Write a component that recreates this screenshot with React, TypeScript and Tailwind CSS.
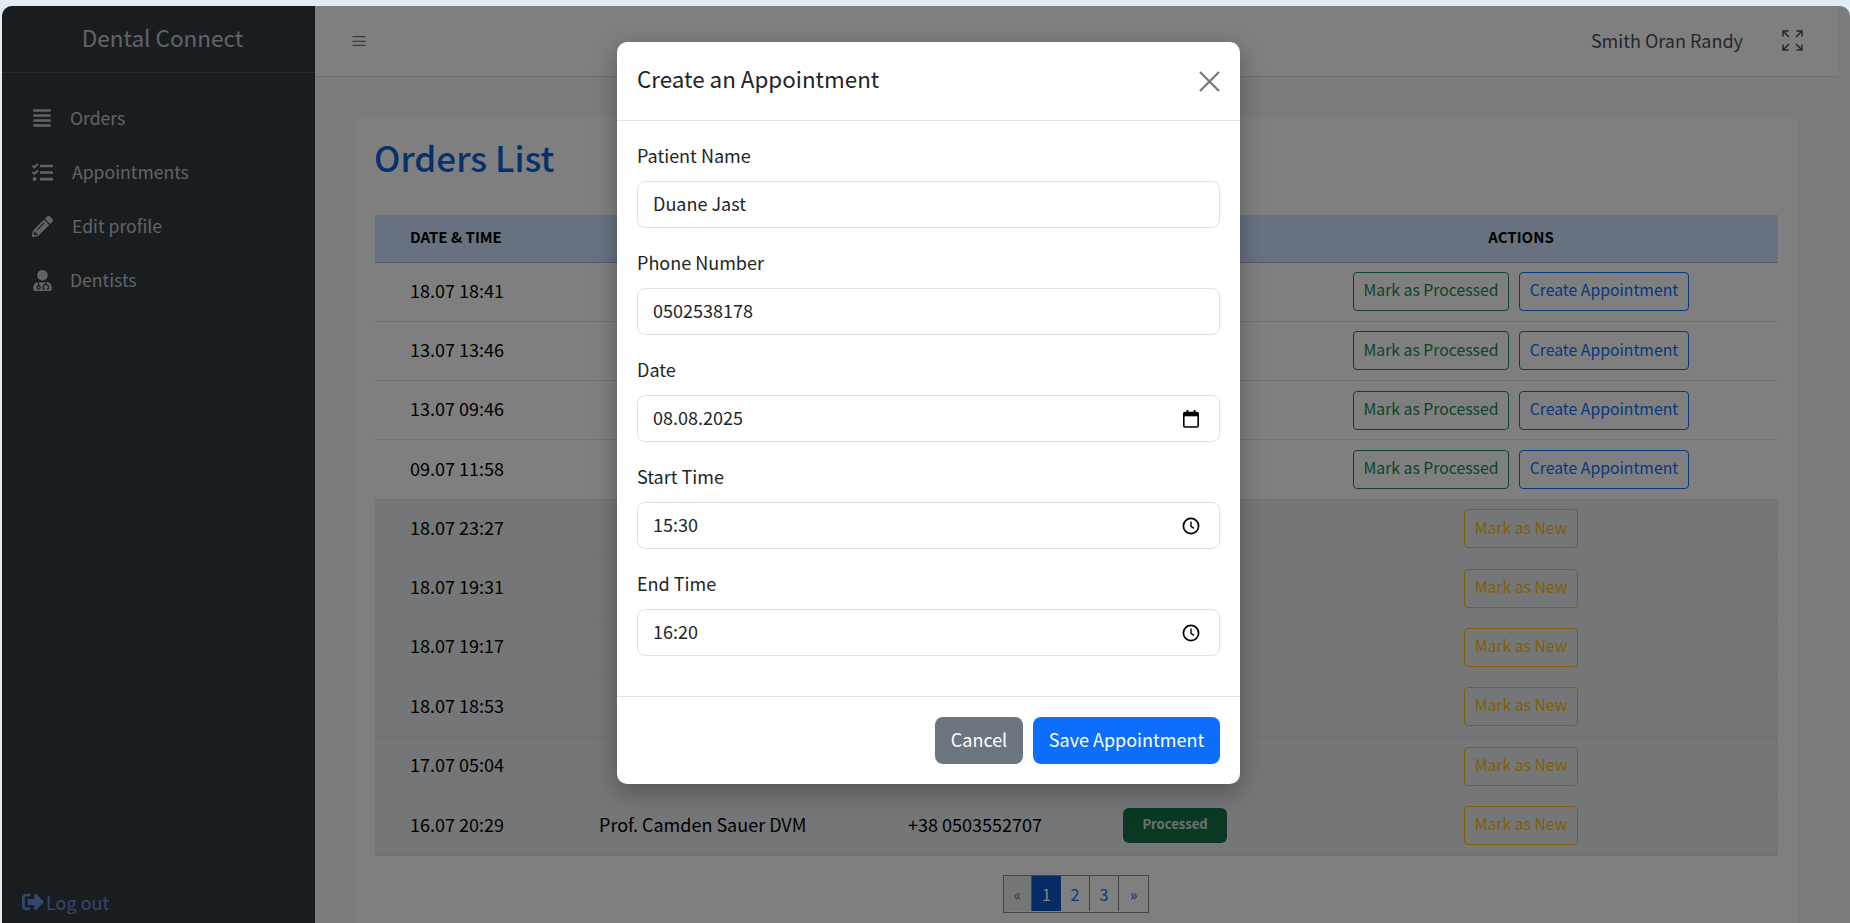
import React from "react";
import { FaSignOutAlt, FaPencilAlt, FaUserMd, FaTasks, FaAlignJustify } from "react-icons/fa";

const font = "font-['Noto_Sans_CJK_SC','Noto_Sans',sans-serif]";

const rows = [
  { d: "18.07 18:41", done: false },
  { d: "13.07 13:46", done: false },
  { d: "13.07 09:46", done: false },
  { d: "09.07 11:58", done: false },
  { d: "18.07 23:27", done: true },
  { d: "18.07 19:31", done: true },
  { d: "18.07 19:17", done: true },
  { d: "18.07 18:53", done: true },
  { d: "17.07 05:04", done: true },
  { d: "16.07 20:29", done: true, name: "Prof. Camden Sauer DVM", phone: "+38 0503552707", status: true },
];

function Calendar() {
  return (
    <svg width="18" height="18" viewBox="0 0 18 18" fill="none">
      <path d="M5.5 0v2.5M12.5 0v2.5" stroke="#000" strokeWidth="1.8" />
      <rect x="1.8" y="2.5" width="14.4" height="14.5" rx="1.3" stroke="#000" strokeWidth="1.6" />
      <rect x="1.8" y="2.5" width="14.4" height="3.8" fill="#000" />
    </svg>
  );
}

function Clock() {
  return (
    <svg width="18" height="18" viewBox="0 0 18 18" fill="none">
      <circle cx="9" cy="9" r="7.6" stroke="#000" strokeWidth="1.7" />
      <path d="M9 4.6V9.4l3 1.9" stroke="#000" strokeWidth="1.4" />
    </svg>
  );
}

function Field({ label, value, icon }: { label: string; value: string; icon?: React.ReactNode }) {
  return (
    <div className="mb-[21px]">
      <label className="mb-[12px] block h-[27px] pb-[1px] text-[18px] leading-[26px] text-[#212529]">{label}</label>
      <div className="relative">
        <input
          readOnly
          value={value}
          className="block h-[47px] w-full rounded-[8px] border border-[#dee2e6] bg-white pb-[4px] pl-[15px] pr-[16px] text-[18px] text-[#212529] outline-none"
        />
        {icon && <span className="absolute right-[20px] top-[15px] flex">{icon}</span>}
      </div>
    </div>
  );
}

function Nav({ icon, label, box }: { icon: React.ReactNode; label: string; box: string }) {
  return (
    <div className="flex h-[54px] items-center pl-[30px] text-[17.6px] text-[#c2c7d0]">
      <span className={`flex shrink-0 ${box}`}>{icon}</span>
      <span>{label}</span>
    </div>
  );
}

export default function App() {
  return (
    <div className={`relative h-[923px] w-[1850px] overflow-hidden bg-[#e3ebf3] ${font}`}>
      <div className="h-[6px]" />
      <div className="ml-[2px] flex h-[917px] overflow-hidden rounded-t-[10px] bg-[#f4f6f9]">
        <aside className="flex w-[313px] shrink-0 flex-col bg-[#343a40]">
          <div className="flex h-[67px] items-center justify-center border-b border-[#4b545c] pb-[2px] pl-[8px] text-[22.5px] text-[#c2c7d0]">
            Dental Connect
          </div>
          <nav className="mt-[18px] flex flex-col">
            <Nav box="w-[38px]" icon={<FaAlignJustify size={20} />} label="Orders" />
            <Nav box="w-[40px]" icon={<FaTasks size={21} />} label="Appointments" />
            <Nav box="w-[40px]" icon={<FaPencilAlt size={21} />} label="Edit profile" />
            <Nav box="w-[38px]" icon={<FaUserMd size={21} />} label="Dentists" />
          </nav>
          <div className="mt-auto flex h-[40px] items-center gap-[2px] pb-[2px] pl-[20px] text-[18px] text-[#6090d8]">
            <FaSignOutAlt size={22} />
            <span>Log out</span>
          </div>
        </aside>
        <main className="min-w-0 flex-1">
          <header className="mr-[12px] flex h-[71px] items-center justify-between border-b border-[#dee2e6] bg-white pb-[2px] pl-[35px] pr-[35px]">
            <span className="text-[18px] leading-none text-[#6c757d]">≡</span>
            <div className="flex items-center gap-[39px]">
              <span className="text-[18px] text-[#495057]">Smith Oran Randy</span>
              <svg width="21" height="21" viewBox="0 0 21 21" fill="none" stroke="#495057" strokeWidth="1.5">
                <path d="M1 6.5V1h5.5M1 1l6 6M14.5 1H20v5.5M20 1l-6 6M1 14.5V20h5.5M1 20l6-6M14.5 20H20v-5.5M20 20l-6-6" />
              </svg>
            </div>
          </header>
          <section className="ml-[40px] mr-[52px] mt-[40px] h-[806px] rounded-t-[6px] bg-white px-[20px]">
            <h1 className="-ml-[1px] flex h-[98px] items-center pb-[18px] text-[35px] font-medium text-[#0c60dc]">Orders List</h1>
            <table className="w-[1403px] table-fixed border-collapse">
              <colgroup>
                <col className="w-[188px]" />
                <col className="w-[309px]" />
                <col className="w-[215px]" />
                <col className="w-[177px]" />
                <col className="w-[514px]" />
              </colgroup>
              <thead>
                <tr className="h-[47px] border-b border-[#adb5bd] bg-[#cfe2ff] text-[15px] font-bold text-black">
                  <th className="pb-[2px] pl-[35px] text-left">DATE &amp; TIME</th>
                  <th className="pb-[2px] text-center">NAME</th>
                  <th className="pb-[2px] text-center">PHONE</th>
                  <th className="pb-[2px] text-center">STATUS</th>
                  <th className="pb-[2px] text-center">ACTIONS</th>
                </tr>
              </thead>
              <tbody>
                {rows.map((r) => (
                  <tr key={r.d} className={`h-[59.3px] border-b border-[#dee2e6] text-[18px] text-black last:h-[60px] ${r.done ? "bg-[#e9ecef]" : "bg-white"}`}>
                    <td className="pb-[3px] pl-[35px]">{r.d}</td>
                    <td className="pb-[3px] pl-[36px]">{r.name}</td>
                    <td className="pb-[3px] pl-[36px]">{r.phone}</td>
                    <td className="pb-[1px] pl-[36px]">
                      {r.status && (
                        <span className="flex h-[35px] w-[104px] items-center justify-center rounded-[6px] bg-[#157347] pb-[2px] text-[13px] font-bold text-[#d8e2dc]">
                          Processed
                        </span>
                      )}
                    </td>
                    <td>
                      {r.done ? (
                        <div className="flex justify-center">
                          <button className="h-[39px] w-[114px] rounded-[4px] border border-[#ffc107] pb-[3px] text-[15.75px] text-[#ffc107]">Mark as New</button>
                        </div>
                      ) : (
                        <div className="flex justify-center gap-[10px]">
                          <button className="h-[39px] w-[156px] rounded-[4px] border border-[#198754] pb-[3px] text-[15.75px] text-[#198754]">Mark as Processed</button>
                          <button className="h-[39px] w-[170px] rounded-[4px] border border-[#0d6efd] pb-[3px] text-[15.75px] text-[#0d6efd]">Create Appointment</button>
                        </div>
                      )}
                    </td>
                  </tr>
                ))}
              </tbody>
            </table>
            <div className="mt-[19px] flex justify-center pr-[1px]">
              <div className="flex h-[38px] border border-[#888] pb-[1px] text-[16px] text-[#0d6efd]">
                <span className="flex w-[28px] items-center justify-center border-r border-[#888] bg-[#e9ecef] text-[#6c757d]">«</span>
                <span className="flex w-[29px] items-center justify-center bg-[#0a58ca] text-white">1</span>
                <span className="flex w-[29px] items-center justify-center border-r border-[#888]">2</span>
                <span className="flex w-[29px] items-center justify-center border-r border-[#888]">3</span>
                <span className="flex w-[29px] items-center justify-center">»</span>
              </div>
            </div>
          </section>
        </main>
      </div>

      <div className="absolute bottom-0 left-[2px] right-0 top-[6px] rounded-t-[10px] bg-black/50" />

      <div className="absolute left-[617px] top-[42px] flex h-[742px] w-[623px] flex-col rounded-[10px] bg-white shadow-[0_8px_24px_rgba(0,0,0,0.3)]">
        <div className="flex h-[79px] shrink-0 items-center justify-between border-b border-[#dee2e6] pl-[20px] pr-[20px]">
          <h5 className="pb-[5px] text-[22.4px] text-[#212529]">Create an Appointment</h5>
          <svg width="21" height="21" viewBox="0 0 21 21" stroke="#777" strokeWidth="2.2">
            <path d="M1 1l19 19M20 1L1 20" />
          </svg>
        </div>
        <div className="flex-1 px-[20px] pt-[21px]">
          <Field label="Patient Name" value="Duane Jast" />
          <Field label="Phone Number" value="0502538178" />
          <Field label="Date" value="08.08.2025" icon={<Calendar />} />
          <Field label="Start Time" value="15:30" icon={<Clock />} />
          <Field label="End Time" value="16:20" icon={<Clock />} />
        </div>
        <div className="flex h-[88px] shrink-0 items-center justify-end gap-[10px] border-t border-[#dee2e6] pr-[20px]">
          <button className="h-[47px] w-[88px] rounded-[8px] bg-[#6c757d] pb-[2px] text-[18px] text-white">Cancel</button>
          <button className="h-[47px] w-[187px] rounded-[8px] bg-[#0d6efd] pb-[2px] text-[18px] text-white">Save Appointment</button>
        </div>
      </div>
    </div>
  );
}
